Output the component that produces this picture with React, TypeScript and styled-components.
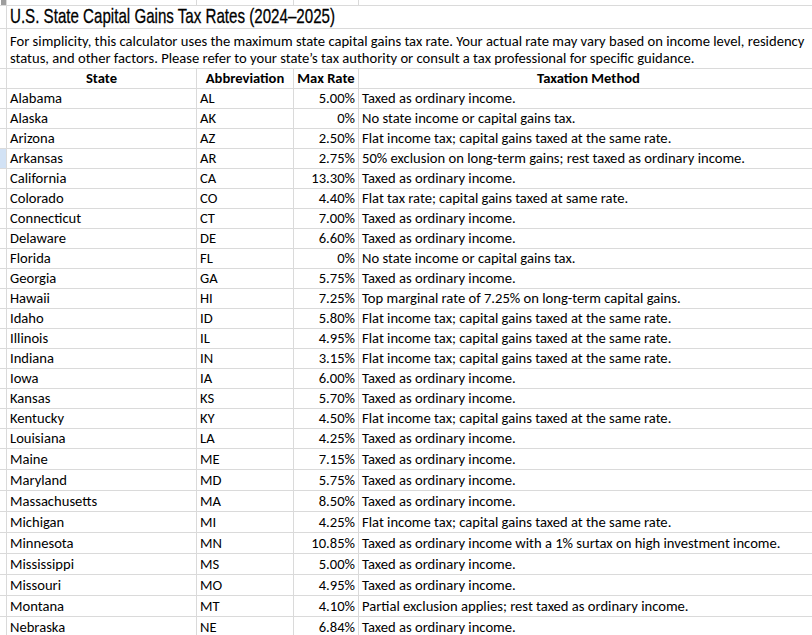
import React from 'react';
import styled, { createGlobalStyle, css } from 'styled-components';

const GlobalStyle = createGlobalStyle`
  html, body {
    margin: 0;
    padding: 0;
    background: #ffffff;
    overflow: hidden;
  }
  body {
    width: 812px;
    height: 635px;
    font-family: Carlito, Calibri, Lato, 'Liberation Sans', sans-serif;
    color: #000000;
  }
`;

type StateRow = {
  name: string;
  abbr: string;
  rate: string;
  method: string;
};

const rows: StateRow[] = [
  { name: 'Alabama', abbr: 'AL', rate: '5.00%', method: 'Taxed as ordinary income.' },
  { name: 'Alaska', abbr: 'AK', rate: '0%', method: 'No state income or capital gains tax.' },
  { name: 'Arizona', abbr: 'AZ', rate: '2.50%', method: 'Flat income tax; capital gains taxed at the same rate.' },
  { name: 'Arkansas', abbr: 'AR', rate: '2.75%', method: '50% exclusion on long-term gains; rest taxed as ordinary income.' },
  { name: 'California', abbr: 'CA', rate: '13.30%', method: 'Taxed as ordinary income.' },
  { name: 'Colorado', abbr: 'CO', rate: '4.40%', method: 'Flat tax rate; capital gains taxed at same rate.' },
  { name: 'Connecticut', abbr: 'CT', rate: '7.00%', method: 'Taxed as ordinary income.' },
  { name: 'Delaware', abbr: 'DE', rate: '6.60%', method: 'Taxed as ordinary income.' },
  { name: 'Florida', abbr: 'FL', rate: '0%', method: 'No state income or capital gains tax.' },
  { name: 'Georgia', abbr: 'GA', rate: '5.75%', method: 'Taxed as ordinary income.' },
  { name: 'Hawaii', abbr: 'HI', rate: '7.25%', method: 'Top marginal rate of 7.25% on long-term capital gains.' },
  { name: 'Idaho', abbr: 'ID', rate: '5.80%', method: 'Flat income tax; capital gains taxed at the same rate.' },
  { name: 'Illinois', abbr: 'IL', rate: '4.95%', method: 'Flat income tax; capital gains taxed at the same rate.' },
  { name: 'Indiana', abbr: 'IN', rate: '3.15%', method: 'Flat income tax; capital gains taxed at the same rate.' },
  { name: 'Iowa', abbr: 'IA', rate: '6.00%', method: 'Taxed as ordinary income.' },
  { name: 'Kansas', abbr: 'KS', rate: '5.70%', method: 'Taxed as ordinary income.' },
  { name: 'Kentucky', abbr: 'KY', rate: '4.50%', method: 'Flat income tax; capital gains taxed at the same rate.' },
  { name: 'Louisiana', abbr: 'LA', rate: '4.25%', method: 'Taxed as ordinary income.' },
  { name: 'Maine', abbr: 'ME', rate: '7.15%', method: 'Taxed as ordinary income.' },
  { name: 'Maryland', abbr: 'MD', rate: '5.75%', method: 'Taxed as ordinary income.' },
  { name: 'Massachusetts', abbr: 'MA', rate: '8.50%', method: 'Taxed as ordinary income.' },
  { name: 'Michigan', abbr: 'MI', rate: '4.25%', method: 'Flat income tax; capital gains taxed at the same rate.' },
  { name: 'Minnesota', abbr: 'MN', rate: '10.85%', method: 'Taxed as ordinary income with a 1% surtax on high investment income.' },
  { name: 'Mississippi', abbr: 'MS', rate: '5.00%', method: 'Taxed as ordinary income.' },
  { name: 'Missouri', abbr: 'MO', rate: '4.95%', method: 'Taxed as ordinary income.' },
  { name: 'Montana', abbr: 'MT', rate: '4.10%', method: 'Partial exclusion applies; rest taxed as ordinary income.' },
  { name: 'Nebraska', abbr: 'NE', rate: '6.84%', method: 'Taxed as ordinary income.' },
];

const GRID = '#dadada';

const Sheet = styled.div`
  display: grid;
  grid-template-columns: 7px 190px 97px 65px 460px;
  width: 819px;
  font-size: 14.6px;
  line-height: 1;
`;

const Cell = styled.div<{ $h?: number; $align?: 'left' | 'center' | 'right'; $bold?: boolean; $span?: number }>`
  box-sizing: border-box;
  height: ${(p) => p.$h ?? 20}px;
  border-right: 1px solid ${GRID};
  border-bottom: 1px solid ${GRID};
  padding: 0 3px;
  display: flex;
  align-items: center;
  justify-content: ${(p) => (p.$align === 'right' ? 'flex-end' : p.$align === 'center' ? 'center' : 'flex-start')};
  font-weight: ${(p) => (p.$bold ? 700 : 400)};
  white-space: nowrap;
  overflow: visible;
  ${(p) =>
    p.$span &&
    css`
      grid-column: span ${p.$span};
    `}
`;

const RowHead = styled.div<{ $h?: number; $selected?: boolean }>`
  box-sizing: border-box;
  height: ${(p) => p.$h ?? 20}px;
  border-right: 1px solid ${GRID};
  border-bottom: 1px solid ${GRID};
  background: ${(p) => (p.$selected ? '#d2e2f5' : '#ffffff')};
`;

const Corner = styled.div`
  box-sizing: border-box;
  height: 6px;
  border-right: 1px solid ${GRID};
  border-bottom: 1px solid ${GRID};
  background: #ffffff;
  position: relative;

  &::after {
    content: '';
    position: absolute;
    right: 0;
    bottom: 0;
    width: 5px;
    height: 5px;
    background: #9e9e9e;
  }
`;

const ColHead = styled.div`
  box-sizing: border-box;
  height: 6px;
  border-right: 1px solid ${GRID};
  border-bottom: 1px solid ${GRID};
  background: #ffffff;
`;

const TitleCell = styled(Cell)`
  align-items: flex-end;
  padding-bottom: 1px;
  border-right: none;
`;

/* no condensed face is installed, so the narrow headline is squeezed horizontally */
const Title = styled.span`
  display: inline-block;
  font-family: 'Liberation Sans Narrow', 'Liberation Sans', sans-serif;
  font-size: 21px;
  line-height: 22px;
  color: #000000;
  transform: scaleX(0.72);
  transform-origin: left center;
  -webkit-text-stroke: 0.3px #000000;
`;

const NoteCell = styled(Cell)`
  flex-direction: column;
  align-items: flex-start;
  justify-content: flex-end;
  padding-bottom: 1px;
  line-height: 17px;
  overflow: hidden;
`;

const App: React.FC = () => {
  return (
    <>
      <GlobalStyle />
      <Sheet>
        <Corner />
        <ColHead />
        <ColHead />
        <ColHead />
        <ColHead />

        <RowHead $h={23} />
        <TitleCell $h={23} $span={4}>
          <Title>U.S. State Capital Gains Tax Rates (2024–2025)</Title>
        </TitleCell>

        <RowHead $h={40} />
        <NoteCell $h={40} $span={4}>
          <span>
            For simplicity, this calculator uses the maximum state capital gains tax rate. Your actual rate may vary based on income level, residency
          </span>
          <span>status, and other factors. Please refer to your state’s tax authority or consult a tax professional for specific guidance.</span>
        </NoteCell>

        <RowHead />
        <Cell $align="center" $bold>State</Cell>
        <Cell $align="center" $bold>Abbreviation</Cell>
        <Cell $align="center" $bold>Max Rate</Cell>
        <Cell $align="center" $bold>Taxation Method</Cell>

        {rows.map((r, i) => {
          const h = i >= 18 ? 21 : 20;
          return (
            <React.Fragment key={r.abbr}>
              <RowHead $h={h} $selected={r.abbr === 'AR'} />
              <Cell $h={h}>{r.name}</Cell>
              <Cell $h={h}>{r.abbr}</Cell>
              <Cell $h={h} $align="right">{r.rate}</Cell>
              <Cell $h={h}>{r.method}</Cell>
            </React.Fragment>
          );
        })}
      </Sheet>
    </>
  );
};

export default App;
